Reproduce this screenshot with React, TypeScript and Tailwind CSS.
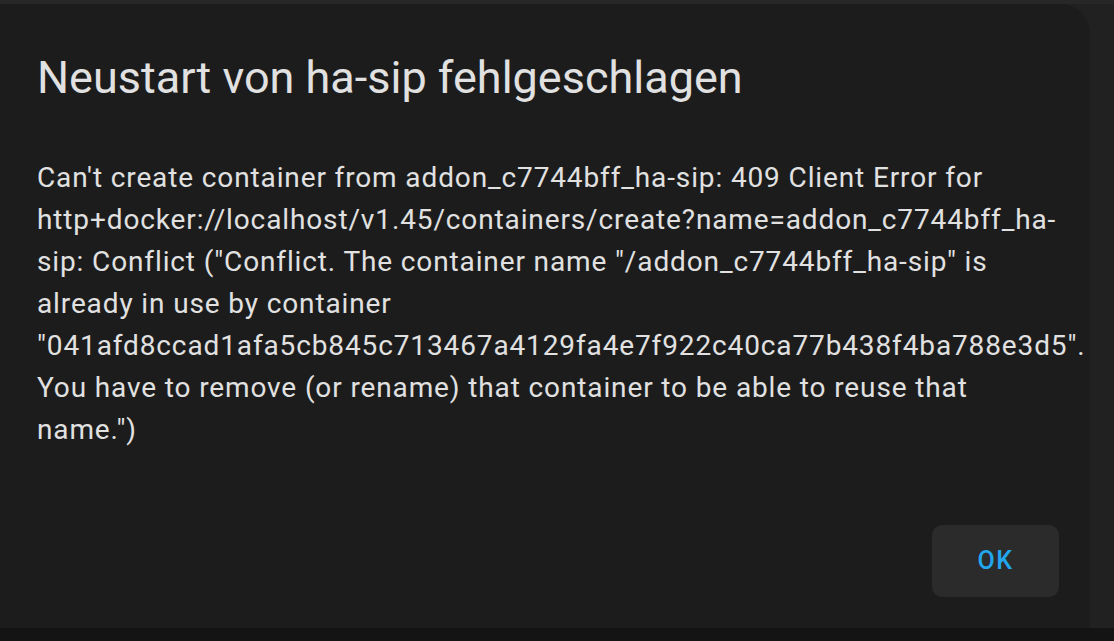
export default function App() {
  return (
    <div className="flex h-[641px] w-[1114px] flex-col overflow-hidden bg-[#212121] font-['Roboto',sans-serif]">
      <div className="h-[4px] shrink-0 bg-[#272727]" />
      <div className="flex min-h-0 flex-1">
        <section className="-ml-[20px] flex w-[1110px] shrink-0 flex-col rounded-tr-[30px] rounded-tl-[20px] bg-[#1c1c1c] pl-[57px] pt-[47px]">
          <h2 className="text-[45px] leading-[54px] font-normal text-[#e1e1e1]">Neustart von ha-sip fehlgeschlagen</h2>
          <p className="mt-[52px] w-[1030px] text-[28px] leading-[42px] tracking-[0.875px] text-[#e1e1e1]">
            Can't create container from addon_c7744bff_ha-sip: 409 Client Error for
            http+docker://localhost/v1.45/containers/create?name=addon_c7744bff_ha-sip: Conflict ("Conflict. The
            container name "/addon_c7744bff_ha-sip" is already in use by container
            "041afd8ccad1afa5cb845c713467a4129fa4e7f922c40ca77b438f4ba788e3d5". You have to remove (or rename) that
            container to be able to reuse that name.")
          </p>
          <div className="mt-auto mb-[31px] flex justify-end pr-[31px]">
            <button className="h-[72px] w-[127px] rounded-[10px] bg-[#2b2b2b] text-[25px] font-medium tracking-[0.06em] text-[#22a6ee]">
              OK
            </button>
          </div>
        </section>
      </div>
      <div className="h-[13px] shrink-0 bg-[#141414]" />
    </div>
  );
}
